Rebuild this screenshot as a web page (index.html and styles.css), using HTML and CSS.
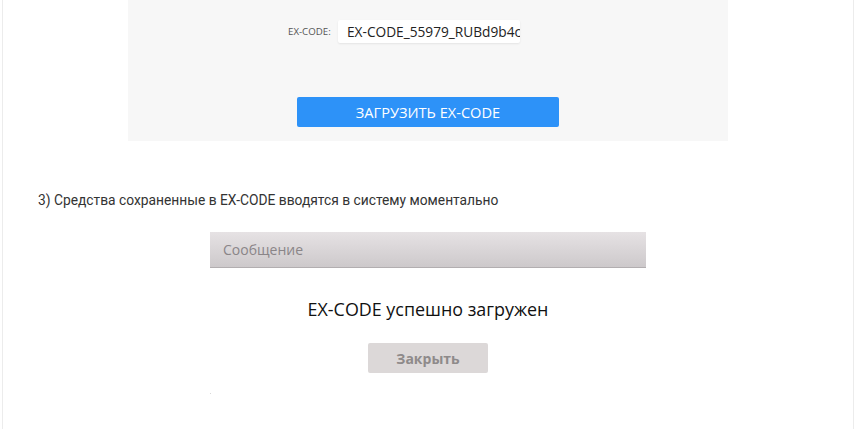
FILE: index.html
```html
<!DOCTYPE html>
<html lang="ru">
<head>
<meta charset="utf-8">
<title>EX-CODE</title>
<link rel="stylesheet" href="styles.css">
</head>
<body>
<div class="page">
  <div class="panel">
    <div class="code-row">
      <span class="code-label">EX-CODE:</span>
      <div class="code-input">EX-CODE_55979_RUBd9b4c8</div>
    </div>
    <div class="btn-row">
      <button class="btn-load">ЗАГРУЗИТЬ EX-CODE</button>
    </div>
  </div>
  <p class="step">3) Средства сохраненные в EX-CODE вводятся в систему моментально</p>
  <div class="dialog">
    <div class="dialog-head">Сообщение</div>
    <div class="dialog-body">
      <div class="dialog-msg">EX-CODE успешно загружен</div>
      <button class="btn-close">Закрыть</button>
    </div>
  </div>
  <div class="corner-dot"></div>
</div>
</body>
</html>
```
FILE: styles.css
```css
html, body {
  margin: 0;
  padding: 0;
  background: #ffffff;
}
.page {
  margin-left: 2px;
  width: 852px;
  height: 429px;
  border-left: 1px solid #ececec;
  border-right: 1px solid #ececec;
  box-sizing: border-box;
  overflow: hidden;
}
.panel {
  margin-left: 125px;
  width: 600px;
  height: 141px;
  background: #f7f7f7;
  box-sizing: border-box;
  padding-top: 20px;
  font-family: "Open Sans", sans-serif;
}
.code-row {
  display: flex;
  align-items: center;
  padding-left: 160px;
  height: 23px;
}
.code-label {
  font-size: 9.7px;
  color: #555;
  width: 50px;
}
.code-input {
  width: 182px;
  height: 23px;
  box-sizing: border-box;
  background: #fff;
  border-radius: 2px;
  box-shadow: 0 1px 2px rgba(0,0,0,0.08);
  font-size: 13.7px;
  line-height: 23px;
  padding-left: 9px;
  color: #222;
  white-space: nowrap;
  overflow: hidden;
}
.btn-row {
  display: flex;
  justify-content: center;
  margin-top: 54px;
}
.btn-load {
  width: 262px;
  height: 30px;
  border: none;
  border-radius: 2px;
  background: #2d92f8;
  color: #fff;
  font-family: "Open Sans", sans-serif;
  font-size: 14.6px;
  padding: 0;
}
.step {
  margin: 51px 0 0 35px;
  font-family: Roboto, sans-serif;
  font-size: 13.8px;
  line-height: 16px;
  color: #333;
}
.dialog {
  margin: 24px 0 0 207px;
  width: 436px;
  font-family: "Open Sans", sans-serif;
}
.dialog-head {
  height: 36px;
  box-sizing: border-box;
  background: linear-gradient(#e6e2e4, #cdc9cb);
  border-bottom: 1px solid #b2aeb0;
  color: #8a8588;
  font-size: 14px;
  line-height: 35px;
  padding-left: 13px;
}
.dialog-body {
  display: flex;
  flex-direction: column;
  align-items: center;
}
.dialog-msg {
  margin-top: 29px;
  font-size: 17.9px;
  line-height: 24px;
  color: #111;
}
.btn-close {
  margin-top: 22px;
  width: 120px;
  height: 30px;
  border: none;
  border-radius: 2px;
  background: #dcd8d8;
  color: #8e8a8a;
  font-family: "Open Sans", sans-serif;
  font-weight: bold;
  font-size: 14px;
  padding: 0;
}
.corner-dot {
  margin: 20px 0 0 207px;
  width: 1px;
  height: 1px;
  background: #d8d8d8;
}
```
